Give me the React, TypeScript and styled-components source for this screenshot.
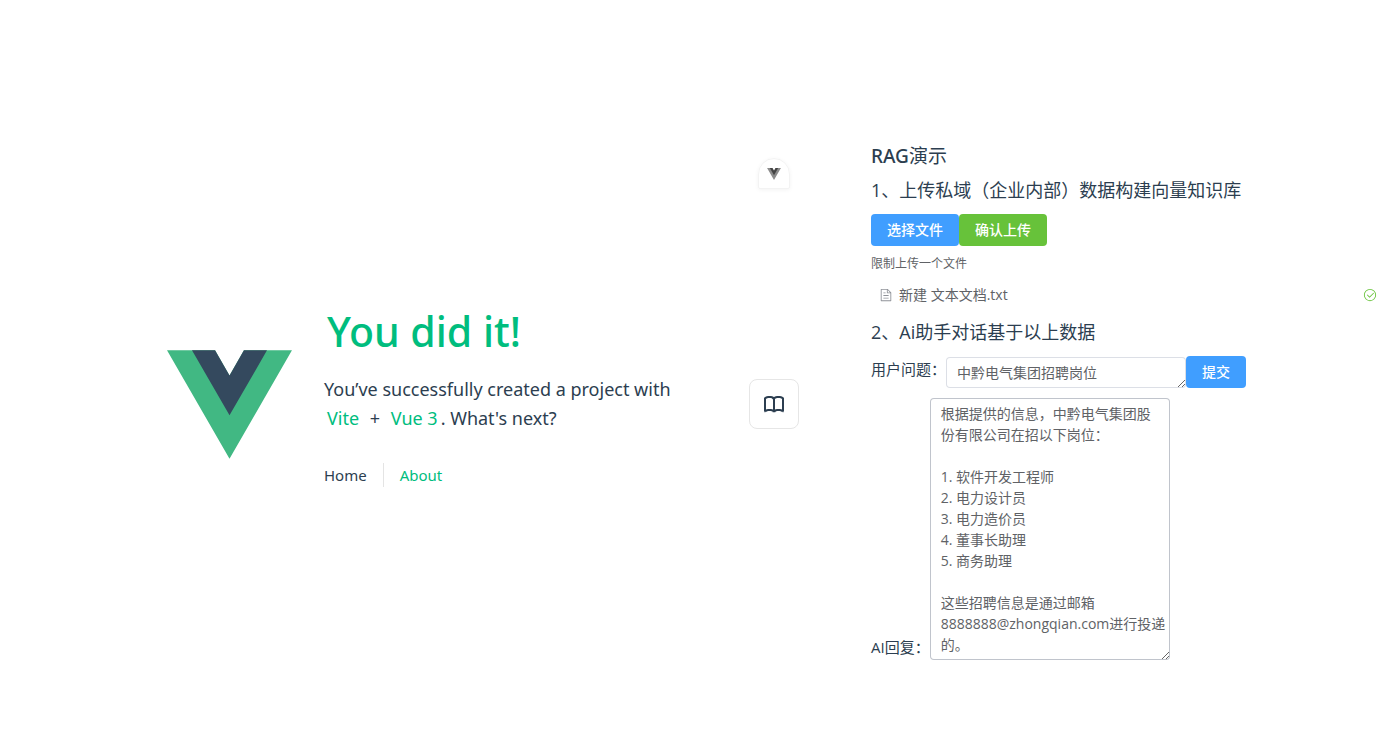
import React, { useState } from "react";
import styled, { createGlobalStyle } from "styled-components";

const GlobalStyle = createGlobalStyle`
  *, *::before, *::after { box-sizing: border-box; margin: 0; }
  body {
    margin: 0;
    background: #fff;
    color: #2c3e50;
    font-family: "Noto Sans", "Noto Sans CJK SC", sans-serif;
    font-size: 15px;
    line-height: 24px;
  }
  button, textarea { font-family: inherit; }
`;

const Page = styled.div`
  display: flex;
  align-items: center;
  min-height: 100vh;
  padding-top: 52px;
`;

const Header = styled.header`
  flex: 1;
  display: flex;
  align-items: center;
  justify-content: flex-end;
  gap: 32px;
  padding-right: 65px;
`;

const Logo = styled.svg`
  flex: none;
  width: 125px;
  height: 109px;
  margin-top: 6px;
`;

const Intro = styled.div`
  width: 360px;
  padding-bottom: 14px;
`;

const Title = styled.h1`
  padding-left: 3px;
  font-size: 41px;
  font-weight: 500;
  line-height: 60px;
  color: #00bd7e;
`;

const Lead = styled.p`
  margin-top: 14px;
  font-size: 18px;
  line-height: 29px;
  white-space: nowrap;
`;

const Link = styled.a`
  padding: 3px;
  color: #00bd7e;
  text-decoration: none;
`;

const Plus = styled.span`
  margin: 0 3px;
`;

const Nav = styled.nav`
  display: flex;
  margin-top: 30px;
`;

const NavLink = styled.a<{ $active?: boolean }>`
  padding: 0 16px;
  color: ${(p) => (p.$active ? "#00bd7e" : "#2c3e50")};
  text-decoration: none;
  &:first-child { padding-left: 0; }
  & + & { border-left: 1px solid #e4e4e4; }
`;

const Main = styled.main`
  flex: 0 0 636px;
  display: flex;
  gap: 72px;
`;

const Rail = styled.div`
  flex: 0 0 50px;
  display: flex;
  flex-direction: column;
  align-items: center;
  justify-content: space-between;
  padding: 16px 0 231px;
`;

const Badge = styled.div`
  display: flex;
  align-items: center;
  justify-content: center;
  width: 32px;
  height: 31px;
  border: 1px solid #f3f3f3;
  border-radius: 16px 16px 2px 2px;
  box-shadow: 0 1px 4px #0000000d;
`;

const IconBox = styled.div`
  display: flex;
  align-items: center;
  justify-content: center;
  width: 50px;
  height: 50px;
  border: 1px solid #e6e6e6;
  border-radius: 8px;
`;

const Panel = styled.section`
  flex: 1;
  min-width: 0;
  font-family: "Open Sans", "Noto Sans CJK SC", sans-serif;
`;

const PanelTitle = styled.h2`
  font-size: 19px;
  font-weight: 400;
  line-height: 28px;
`;

const Acronym = styled.span`
  font-family: "Noto Sans", sans-serif;
  font-weight: 500;
`;

const StepTitle = styled.h3`
  margin: 6px 0 10px;
  font-size: 18px;
  font-weight: 400;
  line-height: 28px;
`;

const Row = styled.div<{ $align?: string }>`
  display: flex;
  align-items: ${(p) => p.$align ?? "center"};
`;

const Button = styled.button<{ $tone: string }>`
  height: 32px;
  padding: 0 16px;
  border: 0;
  border-radius: 4px;
  background: ${(p) => p.$tone};
  color: #fff;
  font-size: 14px;
  font-weight: 500;
  line-height: 20px;
  cursor: pointer;
`;

const Tip = styled.p`
  margin-top: 8px;
  font-size: 12px;
  line-height: 20px;
  color: #606266;
`;

const FileList = styled.ul`
  margin: 9px 0 11px;
  padding: 0;
  list-style: none;
`;

const FileItem = styled.li`
  display: flex;
  align-items: center;
  height: 24px;
  padding: 0 8px;
  font-size: 14px;
  color: #606266;
  svg:last-child { margin-left: auto; }
`;

const FileName = styled.span`
  margin-left: 6px;
`;

const Label = styled.label`
  flex: none;
  line-height: 26px;
  white-space: nowrap;
`;

const TextArea = styled.textarea<{ $strong?: boolean }>`
  display: block;
  width: 240px;
  padding: 5px 2px 5px 11px;
  border: 0;
  outline: 0;
  border-radius: 4px;
  box-shadow: inset 0 0 0 1px ${(p) => (p.$strong ? "#c0c4cc" : "#dcdfe6")};
  background: #fff;
  color: #606266;
  font-size: 14px;
  line-height: 21px;
  resize: vertical;
  overflow: hidden;
`;

const QuestionRow = styled(Row)`
  ${Label} { align-self: flex-start; }
`;

const Answer = styled(Row)`
  margin-top: 10px;
`;

const reply = `根据提供的信息，中黔电气集团股
份有限公司在招以下岗位：

1. 软件开发工程师
2. 电力设计员
3. 电力造价员
4. 董事长助理
5. 商务助理

这些招聘信息是通过邮箱
8888888@zhongqian.com进行投递
的。`;

const VueMark = ({ outer, inner }: { outer: string; inner: string }) => (
  <>
    <path fill={outer} d="M161.1 0l-30.2 52.4L100.6 0H0l130.9 226.7L261.7 0z" />
    <path fill={inner} d="M161.1 0l-30.2 52.4L100.6 0H52.3l78.6 136L209.4 0z" />
  </>
);

export default function App() {
  const [question, setQuestion] = useState("中黔电气集团招聘岗位");
  return (
    <>
      <GlobalStyle />
      <Page>
        <Header>
          <Logo viewBox="0 0 261.76 226.69" role="img" aria-label="Vue logo">
            <VueMark outer="#41b883" inner="#34495e" />
          </Logo>
          <Intro>
            <Title>You did it!</Title>
            <Lead>
              You’ve successfully created a project with
              <br />
              <Link href="#vite">Vite</Link> <Plus>+</Plus> <Link href="#vue">Vue 3</Link>. What's next?
            </Lead>
            <Nav>
              <NavLink href="#home">Home</NavLink>
              <NavLink $active href="#about">About</NavLink>
            </Nav>
          </Intro>
        </Header>
        <Main>
          <Rail>
            <Badge>
              <svg width="14" height="12" viewBox="0 0 261.76 226.69" aria-hidden="true">
                <VueMark outer="#8c8c8c" inner="#444" />
              </svg>
            </Badge>
            <IconBox>
              <svg width="20" height="17" viewBox="0 0 20 17" fill="#2c3e50" aria-hidden="true">
                <path d="M11 2.253a1 1 0 1 0-2 0h2zm-2 13a1 1 0 1 0 2 0H9zm.447-12.167a1 1 0 1 0 1.107-1.666L9.447 3.086zM1 2.253L.447 1.42A1 1 0 0 0 0 2.253h1zm-1 13a1 1 0 0 0 1.553.833L0 15.253zm8.447.833a1 1 0 1 0 1.107-1.666l-1.107 1.666zm0-14.666a1 1 0 1 0 1.107 1.666L8.447 1.42zM19 2.253h1a1 1 0 0 0-.447-.833L19 2.253zm-.553 13.833A1 1 0 0 0 20 15.253l-1.553.833zM10.447 14.42a1 1 0 1 0 1.107 1.666l-1.107-1.666zM9 2.253v13h2v-13H9zm1.553-.833C9.203.523 7.42 0 5.5 0v2c1.572 0 2.961.431 3.947 1.086l1.107-1.666zM5.5 0C3.58 0 1.797.523.447 1.42l1.107 1.666C2.539 2.431 3.928 2 5.5 2V0zM0 2.253v13h2v-13H0zm1.553 13.833C2.539 15.431 3.928 15 5.5 15v-2c-1.92 0-3.703.523-5.053 1.42l1.107 1.666zM5.5 15c1.572 0 2.961.431 3.947 1.086l1.107-1.666C9.203 13.523 7.42 13 5.5 13v2zm5.053-11.914C11.539 2.431 12.928 2 14.5 2V0c-1.92 0-3.703.523-5.053 1.42l1.107 1.666zM14.5 2c1.573 0 2.961.431 3.947 1.086l1.107-1.666C18.203.523 16.421 0 14.5 0v2zm3.5.253v13h2v-13h-2zm1.553 12.167C18.203 13.523 16.421 13 14.5 13v2c1.573 0 2.961.431 3.947 1.086l1.107-1.666zM14.5 13c-1.92 0-3.703.523-5.053 1.42l1.107 1.666C11.539 15.431 12.928 15 14.5 15v-2z" />
              </svg>
            </IconBox>
          </Rail>
          <Panel>
            <PanelTitle>
              <Acronym>RAG</Acronym>演示
            </PanelTitle>
            <StepTitle>1、上传私域（企业内部）数据构建向量知识库</StepTitle>
            <Row>
              <Button type="button" $tone="#409eff">选择文件</Button>
              <Button type="button" $tone="#67c23a">确认上传</Button>
            </Row>
            <Tip>限制上传一个文件</Tip>
            <FileList>
              <FileItem>
                <svg width="14" height="14" viewBox="0 0 1024 1024" fill="#909399" aria-hidden="true">
                  <path d="M832 384H576V128H192v768h640zm-26.496-64L640 154.496V320zM160 64h480l256 256v608a32 32 0 0 1-32 32H160a32 32 0 0 1-32-32V96a32 32 0 0 1 32-32m160 448h384v64H320zm0-192h160v64H320zm0 384h384v64H320z" />
                </svg>
                <FileName>新建 文本文档.txt</FileName>
                <svg width="14" height="14" viewBox="0 0 1024 1024" fill="#67c23a" aria-hidden="true">
                  <path d="M512 896a384 384 0 1 0 0-768 384 384 0 0 0 0 768m0 64a448 448 0 1 1 0-896 448 448 0 0 1 0 896" />
                  <path d="M745.344 361.344a32 32 0 0 1 45.312 45.312l-288 288a32 32 0 0 1-45.312 0l-160-160a32 32 0 1 1 45.312-45.312L480 626.752z" />
                </svg>
              </FileItem>
            </FileList>
            <StepTitle>2、Ai助手对话基于以上数据</StepTitle>
            <QuestionRow>
              <Label htmlFor="question">用户问题：</Label>
              <TextArea id="question" rows={1} value={question} onChange={(e) => setQuestion(e.target.value)} />
              <Button type="button" $tone="#409eff">提交</Button>
            </QuestionRow>
            <Answer $align="flex-end">
              <Label htmlFor="answer">AI回复：</Label>
              <TextArea id="answer" $strong rows={12} readOnly value={reply} />
            </Answer>
          </Panel>
        </Main>
      </Page>
    </>
  );
}
